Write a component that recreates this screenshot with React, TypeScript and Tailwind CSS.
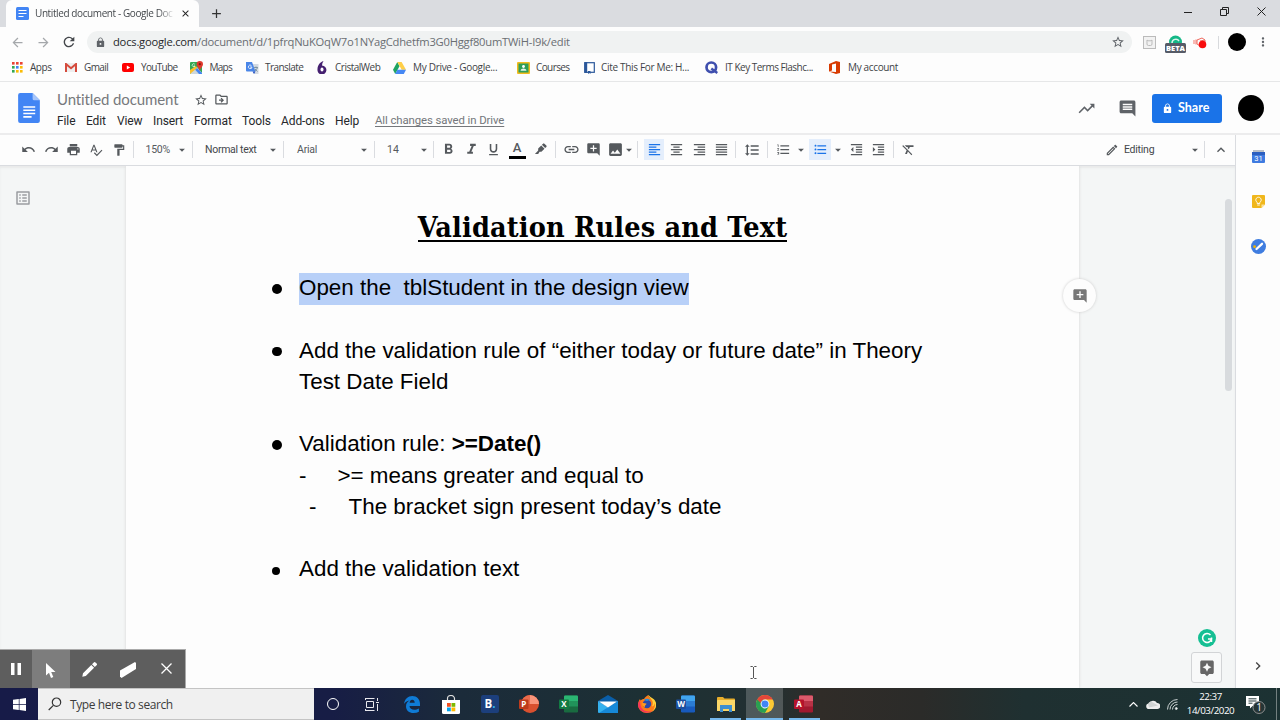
import React from "react";
import {
  MdUndo, MdRedo, MdPrint, MdSpellcheck, MdFormatPaint, MdFormatBold, MdFormatItalic, MdFormatUnderlined,
  MdLink, MdAddComment, MdImage, MdFormatAlignLeft, MdFormatAlignCenter, MdFormatAlignRight,
  MdFormatAlignJustify, MdFormatLineSpacing, MdFormatListNumbered, MdFormatListBulleted, MdFormatIndentDecrease,
  MdFormatIndentIncrease, MdFormatClear, MdOutlineEdit, MdKeyboardArrowUp, MdKeyboardArrowRight, MdStarBorder,
  MdInsertComment, MdLock, MdRefresh, MdArrowBack, MdArrowForward, MdMoreVert, MdTrendingUp, MdAssistant,
  MdAdd, MdClose, MdOutlineDriveFileMove, MdOutlineListAlt, MdArrowDropDown,
} from "react-icons/md";

type Kids = { className?: string; children?: React.ReactNode };

const Cell = ({ className = "", children }: Kids) => (
  <div className={`flex shrink-0 items-center justify-center ${className}`}>{children}</div>
);
const Sep = ({ className = "" }: Kids) => (
  <Cell className={className}><div className="h-[17px] w-px bg-[#dadce0]" /></Cell>
);
const Caret = ({ className = "" }: Kids) => (
  <Cell className={className}><MdArrowDropDown className="size-[14px] shrink-0" /></Cell>
);

function DocGlyph({ className = "" }: Kids) {
  return (
    <svg viewBox="0 0 21 29" className={className}>
      <path d="M2 0h12l7 7v20a2 2 0 0 1-2 2H2a2 2 0 0 1-2-2V2a2 2 0 0 1 2-2z" fill="#4285f4" />
      <path d="M14 0l7 7h-5.5A1.5 1.5 0 0 1 14 5.500z" fill="#a6c5fa" />
      <path d="M5 13.500h11.500M5 16.700h11.500M5 19.900h11.500M5 23.100h8" stroke="#fff" strokeWidth="1.5" />
    </svg>
  );
}

function TabStrip() {
  return (
    <div className="flex h-[27px] items-stretch bg-[#dadce0] pl-[6px]">
      <div className="flex w-[193px] items-center rounded-t-[6px] bg-[#fdfdfd] pl-[10px]">
        <svg viewBox="0 0 13 13" className="size-[13px]">
          <rect width="13" height="13" rx="1.5" fill="#4285f4" />
          <path d="M2.500 3.500h8M2.500 6.500h8M2.500 9.500h5" stroke="#fff" strokeWidth="1.2" />
        </svg>
        <div className="ml-[6px] w-[140px] whitespace-nowrap text-[10px] tracking-[-0.4px] text-[#45494d] [mask-image:linear-gradient(90deg,#000_88%,transparent)]">
          Untitled document - Google Doc
        </div>
        <MdClose className="ml-[5px] size-[11px] text-[#222]" />
      </div>
      <Cell className="w-[34px]"><MdAdd className="size-[15px] text-[#333]" /></Cell>
      <div className="flex-1" />
      <Cell className="w-[37px] pb-[3px]">
        <svg viewBox="0 0 8 8" className="size-[8px]"><path d="M0 4.500h8" stroke="#222" /></svg>
      </Cell>
      <Cell className="w-[37px] pb-[4px]">
        <svg viewBox="0 0 9 9" className="size-[9px]" fill="none" stroke="#222"><path d="M.5 2.500h6v6h-6zM2.500 2.500v-2h6v6h-2" /></svg>
      </Cell>
      <Cell className="w-[37px] pb-[4px]">
        <svg viewBox="0 0 9 9" className="size-[9px]"><path d="M.5.5l8 8M8.500.5l-8 8" stroke="#222" /></svg>
      </Cell>
    </div>
  );
}

function AddressRow() {
  return (
    <div className="flex h-[30px] items-center pl-[5px] text-[#5f6368]">
      <Cell className="w-[25px] text-[#a5a8ab]"><MdArrowBack className="size-[15px]" /></Cell>
      <Cell className="w-[26px] text-[#a5a8ab]"><MdArrowForward className="size-[15px]" /></Cell>
      <Cell className="w-[25px]"><MdRefresh className="size-[16px] text-[#44474b]" /></Cell>
      <div className="ml-[6px] flex h-[22px] w-[1045px] items-center rounded-full bg-[#f0f2f2] pl-[8px] pr-[7.500px]">
        <MdLock className="size-[11px]" />
        <span className="ml-[7px] flex-1 whitespace-nowrap text-[11.2px] tracking-[-0.22px] text-[#6a6e73]">
          <span className="text-[#26282b]">docs.google.com</span>/document/d/1pfrqNuKOqW7o1NYagCdhetfm3G0Hggf80umTWiH-I9k/edit
        </span>
        <MdStarBorder className="size-[14px]" />
      </div>
      <Cell className="w-[34px]">
        <svg viewBox="0 0 13 13" className="size-[13px]" fill="none" stroke="#bbb"><rect x=".5" y=".5" width="12" height="12" fill="#f2f2f2" /><path d="M4 4l1 .8h3L9 4v4a1.500 1.500 0 0 1-1.500 1.500h-2A1.500 1.500 0 0 1 4 8z" /></svg>
      </Cell>
      <Cell className="w-[18px]">
        <svg viewBox="0 0 21 18" className="mt-[3px] h-[18px] w-[21px] shrink-0">
          <circle cx="10.500" cy="7" r="6.500" fill="#15b887" />
          <path d="M7 8a3.800 3.800 0 0 1 7-2" fill="none" stroke="#d9f5ec" strokeWidth="1.5" />
          <rect y="8" width="21" height="10" rx="1.5" fill="#565b67" />
          <text x="10.500" y="15.900" textAnchor="middle" fontSize="7.500" fontWeight="800" fill="#fff" fontFamily="Open Sans">BETA</text>
        </svg>
      </Cell>
      <Cell className="w-[32px]">
        <svg viewBox="0 0 14 13" className="h-[13px] w-[14px]"><path d="M1 4v4M3 3.500v5" stroke="#f58c84" strokeWidth="1.2" /><path d="M4 4l5-2 3 2v4l-5 2-3-2zM7 5l5-1" fill="none" stroke="#ef6a60" /><circle cx="9.500" cy="8.500" r="3.800" fill="#f80d0d" /></svg>
      </Cell>
      <div className="ml-[2px] h-[13px] w-px bg-[#d8dadd]" />
      <div className="ml-[9px] size-[18px] rounded-full bg-black" />
      <Cell className="ml-[9px] w-[16px]"><MdMoreVert className="size-[14px]" /></Cell>
    </div>
  );
}

function Bookmarks() {
  const items: { w: string; i: string; t: string; label: string; icon: React.ReactNode }[] = [
    {
      w: "w-[53px]", i: "w-[18px]", t: "tracking-[-0.45px]", label: "Apps",
      icon: (
        <svg viewBox="0 0 11 11" className="size-[11px]">
          {["#ea4335", "#ea4335", "#ea4335", "#34a853", "#4285f4", "#fbbc05", "#34a853", "#fbbc05", "#fbbc05"].map((c, k) => (
            <rect key={k} x={(k % 3) * 4} y={Math.floor(k / 3) * 4} width="2.6" height="2.6" fill={c} />
          ))}
        </svg>
      ),
    },
    {
      w: "w-[57px]", i: "w-[19px]", t: "tracking-[-0.6px]", label: "Gmail",
      icon: (
        <svg viewBox="0 0 12 9" className="h-[9px] w-[12px]"><rect width="12" height="9" rx=".8" fill="#eee" /><path d="M1 9V1l5 4.200L11 1v8" fill="none" stroke="#d54b3d" strokeWidth="2" /></svg>
      ),
    },
    {
      w: "w-[68px]", i: "w-[19px]", t: "tracking-[-0.68px]", label: "YouTube",
      icon: <svg viewBox="0 0 12 9" className="h-[9px] w-[12px]"><rect width="12" height="9" rx="2" fill="#f00" /><path d="M4.800 2.500v4L8.200 4.500z" fill="#fff" /></svg>,
    },
    {
      w: "w-[56px]", i: "w-[19.500px]", t: "tracking-[-0.75px]", label: "Maps",
      icon: (
        <svg viewBox="0 0 13 13" className="size-[13px]"><rect y="1" width="12" height="12" rx="1" fill="#34a853" /><path d="M0 12L7 6l5 6-1 1H1z" fill="#cfd8dc" /><path d="M5 8.500L7 7l5 5v1H9z" fill="#4285f4" /><path d="M0 9l6-4 1 2-7 6z" fill="#fbc02d" /><path d="M9.800 0a3.200 3.200 0 0 1 3.200 3.200C13 5.500 10.500 6.500 9.800 10 9 6.500 6.600 5.500 6.600 3.200A3.200 3.200 0 0 1 9.800 0z" fill="#e0392c" /><circle cx="9.800" cy="3.200" r="1.100" fill="#7d1a12" /><path d="M4.800 3.200A1.500 1.500 0 1 0 5 5H3.800" fill="none" stroke="#fff" strokeWidth=".7" /></svg>
      ),
    },
    {
      w: "w-[71px]", i: "w-[19px]", t: "tracking-[-0.55px]", label: "Translate",
      icon: (
        <svg viewBox="0 0 13 13" className="size-[13px]"><path d="M5 3h7.500v10H8z" fill="#d4dae2" /><path d="M8 6.500h4M10 5.500v1M8.500 10.500L11.500 7M9 8l2.500 2.500" stroke="#607d8b" strokeWidth=".7" /><path d="M0 1h6l3.500 9.500H1a1 1 0 0 1-1-1z" fill="#4a86e8" /><path d="M5.400 4.500A1.800 1.800 0 1 0 6 6H4" fill="none" stroke="#fff" strokeWidth=".8" /><path d="M6.500 10.500h3L8 13z" fill="#2a56c6" /></svg>
      ),
    },
    {
      w: "w-[76px]", i: "w-[18px]", t: "tracking-[-0.5px]", label: "CristalWeb",
      icon: <svg viewBox="0 0 10 13" className="h-[13px] w-[10px]"><path d="M6.500 0C3 1 .5 4.500.5 8.200A4.500 4.500 0 1 0 5 4.500C5 3 5.500 1.500 6.500 0z" fill="#452070" /><ellipse cx="5" cy="8.600" rx="1.500" ry="2" fill="#fff" /></svg>,
    },
    {
      w: "w-[124px]", i: "w-[20px]", t: "tracking-[-0.3px]", label: "My Drive - Google...",
      icon: <svg viewBox="0 0 13 12" className="h-[12px] w-[13px]"><path d="M4.300 0L0 7.700 2.200 12 6.500 4.200z" fill="#1fa463" /><path d="M4.300 0h4.300L13 7.700H8.700z" fill="#ffcf48" /><path d="M2.200 12l2.200-4.300H13L10.800 12z" fill="#4688f4" /></svg>,
    },
    {
      w: "w-[67px]", i: "w-[19px]", t: "tracking-[-0.6px]", label: "Courses",
      icon: <svg viewBox="0 0 13 12" className="h-[12px] w-[13px]"><rect width="13" height="12" rx="1" fill="#f2bb1d" /><rect x="1.500" y="1.500" width="10" height="9" fill="#2f9e58" /><circle cx="6.500" cy="4.500" r="1.400" fill="#fff" /><path d="M3.500 8.700c.5-3 5.500-3 6 0z" fill="#e5f4ea" /></svg>,
    },
    {
      w: "w-[121px]", i: "w-[17px]", t: "tracking-[-0.32px]", label: "Cite This For Me: H...",
      icon: <svg viewBox="0 0 11 12" className="h-[12px] w-[11px]"><rect x=".7" y=".7" width="9.600" height="9.600" fill="#fff" stroke="#2b579a" strokeWidth="1.2" /><path d="M2 0v11" stroke="#2b579a" strokeWidth="2.400" /><path d="M4 9v3l1.300-1L6.500 12V9z" fill="#2b579a" /></svg>,
    },
    {
      w: "w-[124px]", i: "w-[20px]", t: "tracking-[-0.5px]", label: "IT Key Terms Flashc...",
      icon: <svg viewBox="0 0 13 13" className="size-[13px]"><circle cx="6.300" cy="6.300" r="4.800" fill="none" stroke="#3f4fae" strokeWidth="2.700" /><path d="M6.300 7.500l6 4.500" stroke="#3f4fae" strokeWidth="2.400" /></svg>,
    },
    {
      w: "w-[80px]", i: "w-[19px]", t: "tracking-[-0.35px]", label: "My account",
      icon: <svg viewBox="0 0 11 13" className="h-[13px] w-[11px]"><path d="M0 3L7 0l4 1v11l-4 1-7-2.500L7 11V2.500L3 3.500v6L0 10.500z" fill="#d83b01" /></svg>,
    },
  ];
  return (
    <div className="flex h-[25px] items-center border-b border-[#e6e7e8] pb-[3px] pl-[12px] text-[10px] text-[#3f4347]">
      {items.map((b) => (
        <div key={b.label} className={`flex shrink-0 items-center ${b.w}`}>
          <div className={`shrink-0 ${b.i}`}>{b.icon}</div>
          <span className={`whitespace-nowrap pb-px ${b.t}`}>{b.label}</span>
        </div>
      ))}
    </div>
  );
}

function Header() {
  const menu = [
    ["File", "w-[29px]"], ["Edit", "w-[31px]"], ["View", "w-[36px]"], ["Insert", "w-[41px]"],
    ["Format", "w-[48px]"], ["Tools", "w-[39px]"], ["Add-ons", "w-[54px]"], ["Help", "w-[40px]"],
  ];
  return (
    <div className="flex h-[53px] shrink-0 items-start border-b-2 border-[#ececed] pl-[18px]">
      <DocGlyph className="mt-[11px] h-[30px] w-[22px]" />
      <div className="ml-[17px] flex-1 font-[Roboto]">
        <div className="mt-[7px] flex h-[21px] items-center text-[#55595d]">
          <span className="w-[136.500px] whitespace-nowrap pb-px font-[Lato] text-[15px] tracking-[-0.12px] text-[#77797c]">Untitled document</span>
          <MdStarBorder className="size-[14px]" />
          <MdOutlineDriveFileMove className="ml-[6px] size-[15px]" />
        </div>
        <div className="flex h-[21px] items-center whitespace-nowrap text-[12px] tracking-[-0.1px] text-[#26282b]">
          {menu.map(([m, w]) => <span key={m} className={w}>{m}</span>)}
          <span className="text-[11.4px] text-[#74777b] underline underline-offset-2">All changes saved in Drive</span>
        </div>
      </div>
      <div className="mt-[11px] flex h-[30px] items-center text-[#5f6368]">
        <Cell className="w-[41px]"><MdTrendingUp className="size-[19px]" /></Cell>
        <Cell className="w-[41px]"><MdInsertComment className="size-[19px]" /></Cell>
        <div className="ml-[4px] flex h-[29px] w-[70px] items-center rounded-[3px] bg-[#1a73e8] pl-[10px] text-white">
          <MdLock className="size-[11px]" />
          <span className="ml-[5px] font-[Lato] text-[12.5px] font-bold">Share</span>
        </div>
        <div className="ml-[16px] mr-[16px] size-[26px] rounded-full bg-black" />
      </div>
    </div>
  );
}

function Toolbar() {
  const s = "size-[15px]";
  return (
    <div className="flex h-[31px] shrink-0 items-center border-b border-[#dadce0] pb-px pl-[17px] font-[Roboto] text-[10.500px] text-[#55595d]">
      <Cell className="w-[23px]"><MdUndo className={s} /></Cell>
      <Cell className="w-[22px]"><MdRedo className={s} /></Cell>
      <Cell className="w-[23px]"><MdPrint className={s} /></Cell>
      <Cell className="w-[22px]"><MdSpellcheck className="size-[14px]" /></Cell>
      <Cell className="w-[23px]"><MdFormatPaint className="size-[14px]" /></Cell>
      <Sep className="w-[7px]" />
      <span className="w-[38px] pl-[8.500px] tracking-[-0.25px]">150%</span>
      <Caret className="w-[14px]" />
      <Sep className="w-[6px]" />
      <span className="w-[71px] whitespace-nowrap pl-[10px] tracking-[-0.3px] text-[#44474b]">Normal text</span>
      <Caret className="w-[14px]" />
      <Sep className="w-[6px]" />
      <span className="w-[70px] pl-[11px] tracking-[-0.2px]">Arial</span>
      <Caret className="w-[16px]" />
      <Sep className="w-[4px]" />
      <span className="w-[41px] pl-[11px]">14</span>
      <Caret className="w-[14px]" />
      <Sep className="w-[5px]" />
      <Cell className="w-[24px]"><MdFormatBold className="size-[17px]" /></Cell>
      <Cell className="w-[22px]"><MdFormatItalic className="size-[17px]" /></Cell>
      <Cell className="w-[23px]"><MdFormatUnderlined className="size-[15px]" /></Cell>
      <Cell className="w-[24px]">
        <div className="flex h-[18px] w-[17px] flex-col items-center border-b-[3px] border-black text-[13px] font-medium leading-[14px]">A</div>
      </Cell>
      <Cell className="w-[23px]">
        <svg viewBox="0 0 14 14" className="size-[13px]" fill="currentColor"><path d="M13.300 2.800L11.200.7a1 1 0 0 0-1.400 0L8.500 2l3.500 3.500 1.300-1.300a1 1 0 0 0 0-1.400zM7.800 2.700L4.500 6v2L1 11.800h3.500L6 9.500h2l3.300-3.300z" /></svg>
      </Cell>
      <Sep className="w-[7px]" />
      <Cell className="w-[24px]"><MdLink className="size-[17px]" /></Cell>
      <Cell className="w-[21px]"><MdAddComment className="size-[15px]" /></Cell>
      <Cell className="w-[23px]"><MdImage className="size-[17px]" /></Cell>
      <Caret className="w-[3px]" />
      <Sep className="w-[14px]" />
      <Cell className="h-[21px] w-[20px] bg-[#e4eefc] text-[#1a73e8]"><MdFormatAlignLeft className={s} /></Cell>
      <Cell className="w-[25px]"><MdFormatAlignCenter className={s} /></Cell>
      <Cell className="w-[20px]"><MdFormatAlignRight className={s} /></Cell>
      <Cell className="w-[24px]"><MdFormatAlignJustify className={s} /></Cell>
      <Sep className="w-[5px]" />
      <Cell className="w-[27px]"><MdFormatLineSpacing className="size-[16px]" /></Cell>
      <Sep className="w-[4px]" />
      <Cell className="w-[28px]"><MdFormatListNumbered className={s} /></Cell>
      <Caret className="w-[7px]" />
      <Cell className="ml-[5px] h-[21px] w-[22px] bg-[#e4eefc] text-[#1a73e8]"><MdFormatListBulleted className={s} /></Cell>
      <Caret className="w-[13px]" />
      <Cell className="w-[24px]"><MdFormatIndentDecrease className={s} /></Cell>
      <Cell className="w-[21px]"><MdFormatIndentIncrease className={s} /></Cell>
      <Sep className="w-[8px]" />
      <Cell className="w-[23px]"><MdFormatClear className="size-[15px]" /></Cell>
      <div className="flex-1" />
      <MdOutlineEdit className="size-[14px]" />
      <span className="ml-[5px] w-[64px] tracking-[-0.25px] text-[#44474b]">Editing</span>
      <Caret className="w-[14px]" />
      <Sep className="w-[5px]" />
      <Cell className="w-[28px]"><MdKeyboardArrowUp className="size-[16px]" /></Cell>
    </div>
  );
}

function Row({ children, bullet = "", className = "" }: Kids & { bullet?: string }) {
  return (
    <div className={`flex ${className}`}>
      <div className="flex h-[31.200px] w-[29px] items-center pl-[2px] pt-[2px]">
        {bullet && <div className={`rounded-full bg-black ${bullet}`} />}
      </div>
      <div className="whitespace-nowrap">{children}</div>
    </div>
  );
}

function DocumentArea() {
  return (
    <div className="relative flex flex-1 overflow-hidden bg-[#f4f6f6] shadow-[inset_0_2px_2px_#e9eaea]">
      <div className="w-[126px] pl-[14px] pt-[23px] text-[#9a9da1]"><MdOutlineListAlt className="size-[18px]" /></div>
      <div className="w-[953px] bg-[#fdfdfd] font-['Liberation_Sans'] text-[22.4px] leading-[31.200px] text-black shadow-[0_0_3px_#d4d6d6]">
        <h1 className="flex h-[106.400px] justify-center pt-[39px] font-['DejaVu_Serif'] text-[28.500px] font-bold leading-[44px] [font-stretch:condensed]">
          <span className="h-[37px] whitespace-nowrap border-b-2 border-black leading-[44px] tracking-[0.180px]">Validation Rules and Text</span>
        </h1>
        <div className="pl-[144px]">
          <Row bullet="size-[9.500px]"><span className="-mb-px block bg-[linear-gradient(#b8d0f8,#b8d0f8)] bg-[position:0_1px] bg-no-repeat pb-px">Open the&nbsp; tblStudent in the design view</span></Row>
          <Row bullet="size-[9.500px]" className="mt-[31.200px]">Add the validation rule of “either today or future date” in Theory<br />Test Date Field</Row>
          <Row bullet="size-[9.500px]" className="mt-[31.200px]">Validation rule: <b>&gt;=Date()</b></Row>
          <div className="flex pl-[29px]"><span className="w-[38.500px]">-</span>&gt;= means greater and equal to</div>
          <div className="flex pl-[39px]"><span className="w-[39.500px]">-</span>The bracket sign present today’s date</div>
          <Row bullet="size-[8px] mt-[3px]" className="mt-[31.200px]">Add the validation text</Row>
        </div>
      </div>
      <div className="flex flex-1 flex-col items-end">
        <div className="mr-[3px] mt-[33px] h-[192px] w-[7px] rounded-full bg-[#d8dbde]" />
        <div className="flex-1" />
        <div className="mb-[5px] mr-[19px] flex size-[18px] items-center justify-center rounded-full bg-[#15bf93]">
          <svg viewBox="0 0 12 12" className="size-[12px]" fill="none" stroke="#fff" strokeWidth="1.5"><path d="M9.500 3A4.500 4.500 0 1 0 10.500 7H7M10.500 5.500V10" /></svg>
        </div>
        <div className="mb-[5px] mr-[13px] flex size-[31px] items-center justify-center rounded-[3px] border border-[#d2d4d6] bg-[#f8f9f9] text-[#666]"><MdAssistant className="size-[18px]" /></div>
      </div>
      <div className="absolute left-[1063px] top-[113px] flex size-[33px] items-center justify-center rounded-full bg-[#fdfdfd] text-[#777] shadow-[0_0_3px_#ccc]"><MdAddComment className="size-[16px]" /></div>
      <svg viewBox="0 0 7 13" className="absolute left-[750px] top-[500px] h-[13px] w-[7px]" fill="none" stroke="#555"><path d="M.5.5h2l1 1 1-1h2M3.500 1v11M.5 12.500h2l1-1 1 1h2" /></svg>
    </div>
  );
}

function SidePanel() {
  return (
    <div className="flex w-[45px] flex-col items-center border-l border-[#dadce0] pt-[14px]">
      <svg viewBox="0 0 13 14" className="h-[14px] w-[13px]"><path d="M1 1h11v3H1z" fill="#b9bfc8" /><path d="M0 3h13v10a1 1 0 0 1-1 1H1a1 1 0 0 1-1-1z" fill="#3f7be0" /><path d="M0 3h13v3H0z" fill="#2c5fc0" /><text x="6.500" y="11.500" fontSize="7.500" textAnchor="middle" fill="#fff" fontFamily="Roboto">31</text></svg>
      <svg viewBox="0 0 13 13" className="mt-[32px] size-[13px]"><path d="M1 0h11a1 1 0 0 1 1 1v8.500L9.500 13H1a1 1 0 0 1-1-1V1a1 1 0 0 1 1-1z" fill="#f0b71c" /><path d="M13 9.500L9.500 13V9.500z" fill="#fbe3a0" /><path d="M5.200 8.500V7.300a2.700 2.700 0 1 1 2.600 0v1.200zM5.200 10h2.600" fill="none" stroke="#fff" strokeWidth=".9" /></svg>
      <svg viewBox="0 0 15 15" className="mt-[31px] size-[15px]"><circle cx="7.500" cy="7.500" r="7.500" fill="#3f7de0" /><path d="M5.500 10L11 4.800" stroke="#fff" strokeWidth="2.300" strokeLinecap="round" /><circle cx="3.600" cy="7.700" r="1.400" fill="#f4b400" /></svg>
      <div className="flex-1" />
      <MdKeyboardArrowRight className="mb-[14px] size-[16px] text-[#444]" />
    </div>
  );
}

const OfficeIcon = ({ letter, top, mid, low, tile }: { letter: string; top: string; mid: string; low: string; tile: string }) => (
  <svg viewBox="0 0 20 18" className="h-[18px] w-[20px]">
    <rect x="5" y=".5" width="14" height="17" rx="1.200" fill={low} />
    <path d="M5 1.700A1.200 1.200 0 0 1 6.200.5h11.600A1.200 1.200 0 0 1 19 1.700V6H5z" fill={top} />
    <path d="M5 6h14v5.500H5z" fill={mid} />
    <rect y="4.500" width="10" height="9.500" rx="1" fill={tile} />
    <text x="5" y="12" fontSize="8" fontWeight="700" textAnchor="middle" fill="#fff" fontFamily="Open Sans">{letter}</text>
  </svg>
);

function Taskbar() {
  const c = "w-[39.250px] h-full";
  return (
    <div className="flex h-[32px] shrink-0 items-center bg-[linear-gradient(90deg,#171b48_0%,#171d45_26%,#1b2b3a_36%,#1d3034_50%,#223032_60%,#302c28_64%,#2b2b29_72%,#1f3031_80%,#1c3233_100%)]">
      <Cell className="w-[38px]">
        <svg viewBox="0 0 13 13" className="size-[13px]" fill="#fff"><path d="M0 1.800L5.800 1v5.100H0zM6.500.9L13 0v6.100H6.500zM0 6.800h5.800v5.100L0 11.200zM6.500 6.800H13V13l-6.500-.9z" /></svg>
      </Cell>
      <div className="flex h-full w-[276px] items-center border-y border-[#c4c4c4] bg-[#f0f0f0] pl-[10px] text-[#3c3c3c]">
        <svg viewBox="0 0 14 14" className="size-[14px]" fill="none" stroke="#333" strokeWidth="1.200"><circle cx="8.500" cy="5.200" r="4.200" /><path d="M5.400 8.300L.7 13" /></svg>
        <span className="ml-[8px] whitespace-nowrap pt-px text-[12px] tracking-[-0.4px]">Type here to search</span>
      </div>
      <Cell className={`${c} -ml-[0.600px]`}><div className="size-[12px] rounded-full border-[1.900px] border-white" /></Cell>
      <Cell className={c}>
        <svg viewBox="0 0 14 13" className="h-[13px] w-[14px]" fill="none" stroke="#e8e8ee"><path d="M1.500 3.500h7v6h-7zM.5 0v2M.5.500h9M.5 12.500h9M.5 11v2M12.500 0v3M12.500 6v7M11 4.500h3" /></svg>
      </Cell>
      <Cell className={c}>
        <svg viewBox="0 0 16 17" className="h-[17px] w-[16px]"><path d="M0 8C.6 3 4 0 8.300 0 13 0 16 3.500 16 8v2H5.500c.2 2.500 2.300 3.700 4.700 3.700 1.700 0 3.300-.5 4.700-1.300v3.400C13.400 16.600 11.600 17 9.600 17 5 17 2 14.300 2 10.200 2 7.500 3.500 5.500 5.500 4.500 3 4.800 1 6.300 0 8zm5.600-1.200h5.100c0-2-1-3-2.500-3S5.900 5 5.600 6.800z" fill="#0f7bd6" /></svg>
      </Cell>
      <Cell className={c}>
        <svg viewBox="0 0 18 19" className="h-[19px] w-[18px]"><path d="M5.500 6V3.500a3.500 3 0 0 1 7 0V6" fill="none" stroke="#ddd" strokeWidth="1.200" /><path d="M0 5h18v12.500a1.500 1.500 0 0 1-1.500 1.500h-15A1.500 1.500 0 0 1 0 17.500z" fill="#fff" /><path d="M5 8h3.800v3.800H5z" fill="#f25022" /><path d="M9.500 8h3.800v3.800H9.500z" fill="#7fba00" /><path d="M5 12.500h3.800v3.800H5z" fill="#00a4ef" /><path d="M9.500 12.500h3.800v3.800H9.500z" fill="#ffb900" /></svg>
      </Cell>
      <Cell className={c}><div className="flex size-[18px] items-center justify-center rounded-[2px] bg-[#1c3f7c] text-[11.500px] font-bold text-white">B<span className="text-[#31b5f0]">.</span></div></Cell>
      <Cell className={c}>
        <svg viewBox="0 0 20 18" className="h-[18px] w-[20px]"><circle cx="11" cy="9" r="9" fill="#d9502f" /><path d="M11 0a9 9 0 0 1 9 9h-9z" fill="#f9957b" /><path d="M11 0v9H2a9 9 0 0 1 9-9z" fill="#ea6b4c" /><rect y="4.500" width="9.500" height="9.500" rx="1" fill="#bd3b1c" /><text x="4.800" y="12" fontSize="8" fontWeight="700" textAnchor="middle" fill="#fff" fontFamily="Open Sans">P</text></svg>
      </Cell>
      <Cell className={c}><OfficeIcon letter="X" top="#2bb673" mid="#21935a" low="#196b40" tile="#127a43" /></Cell>
      <Cell className={c}>
        <svg viewBox="0 0 20 18" className="h-[18px] w-[20px]"><path d="M0 6l10-6 10 6v2H0z" fill="#0a5ea8" /><path d="M2 5h16v8H2z" fill="#fff" /><path d="M0 6l10 6.500L20 6v11a1 1 0 0 1-1 1H1a1 1 0 0 1-1-1z" fill="#35b1ee" /><path d="M20 6v12H1z" fill="#1689d8" /><path d="M2 5h16l1 1.700-9 5.800L1 6.700z" fill="#0a5ea8" /><path d="M1 6.500h18L10 12.500z" fill="#fff" /></svg>
      </Cell>
      <Cell className={c}>
        <svg viewBox="0 0 18 18" className="size-[18px]"><path d="M2 4l.5 1.500C4 4 5 4 6 4c1-2 2.500-3 4.500-4-.3 1.500.5 2 1.500 3C15 4 18 6 18 10a9 8 0 0 1-18 0c0-2.500.8-4.500 2-6z" fill="#ff7a18" /><path d="M10.500 0c-.3 1.500.5 2 1.500 3 3 2.500 3.500 5 2 8.500 2-.5 2.500-2 2.700-3.500 1 4-1.200 8-4.200 9.200C20 15 19 6.500 15.500 4 13.500 2.500 12 2 10.500 0z" fill="#ffd23c" /><path d="M0 10a9 8 0 0 0 15 5.500C9 18 3.500 15.500 2.500 10L2 5.500C.5 7 0 8.500 0 10z" fill="#f6365a" /><circle cx="9" cy="9" r="4.200" fill="#2b49a8" /><path d="M4 8.500c1.500-1 3 .3 4.500 0C8.500 10 6.500 10 7 12c-2-.5-3-2-3-3.500z" fill="#ff9b1f" /><path d="M6 5c2-2 5-1.500 6.500.5C11 5 10 5.500 9 6z" fill="#1f8fe0" /></svg>
      </Cell>
      <Cell className={c}><OfficeIcon letter="W" top="#41a5ee" mid="#2b7cd3" low="#185abd" tile="#1c4f9f" /></Cell>
      <Cell className={c}>
        <div className="flex h-full w-[31px] flex-col items-center justify-end border-b-2 border-[#76b9ed] pb-[6px]">
          <svg viewBox="0 0 18 15" className="h-[15px] w-[18px]"><path d="M0 1a1 1 0 0 1 1-1h5l1.500 1.500H17a1 1 0 0 1 1 1V14H0z" fill="#e8ae2c" /><path d="M1 3h17v11H0V4a1 1 0 0 1 1-1z" fill="#fbd768" /><path d="M3 8h12v7h-3v-3H6v3H3z" fill="#3e8fd0" /></svg>
        </div>
      </Cell>
      <Cell className={c}>
        <div className="flex h-full w-[37px] flex-col items-center justify-end border-b-2 border-[#76b9ed] bg-white/20 pb-[5px]">
          <svg viewBox="0 0 18 18" className="size-[18px]"><circle cx="9" cy="9" r="9" fill="#fcc934" /><path d="M1.200 4.500a9 9 0 0 0 7.800 13.500l4-7-4-2z" fill="#2aa052" /><path d="M1.200 4.500L5 11l4-6.500z" fill="#2aa052" /><path d="M1.200 4.500A9 9 0 0 1 16.800 4.500H9A4.500 4.500 0 0 0 4.800 8z" fill="#e5463a" /><circle cx="9" cy="9" r="4.400" fill="#fff" /><circle cx="9" cy="9" r="3.500" fill="#4285f4" /></svg>
        </div>
      </Cell>
      <Cell className={c}>
        <div className="flex h-full w-[31px] flex-col items-center justify-end border-b-2 border-[#76b9ed] pb-[5px]"><OfficeIcon letter="A" top="#dc5a6c" mid="#b83246" low="#a0192f" tile="#b5122b" /></div>
      </Cell>
      <div className="flex-1" />
      <Cell className="w-[20px]"><svg viewBox="0 0 9 5" className="h-[5px] w-[9px]" fill="none" stroke="#fff" strokeWidth="1.100"><path d="M.5 4.500l4-4 4 4" /></svg></Cell>
      <Cell className="w-[19px]"><svg viewBox="0 0 14 9" className="h-[9px] w-[14px]"><path d="M3 9a2.800 2.800 0 0 1 0-5.600A4.500 4.500 0 0 1 11 3a3 3 0 0 1 .5 6z" fill="#eee" /><path d="M2 4a4 4 0 0 1 3-2.500l7 4-9 2z" fill="#d0d3d3" /></svg></Cell>
      <Cell className="w-[21px]"><svg viewBox="0 0 11 11" className="size-[11px]" fill="none" stroke="#ccd3d3"><path d="M.5 10.500a10 10 0 0 1 10-10M3 10.500A7.500 7.500 0 0 1 10.500 3M5.500 10.500a5 5 0 0 1 5-5" /><circle cx="9.300" cy="9.500" r="1" fill="#fff" /></svg></Cell>
      <div className="w-[55px] whitespace-nowrap pb-px text-center text-[9.800px] leading-[14px] tracking-[-0.45px] text-white">22:37<br />14/03/2020</div>
      <Cell className="ml-[8px] w-[20px]">
        <svg viewBox="0 0 20 20" className="size-[20px] shrink-0"><path d="M0 2h13v10H6.500L4 14.500V12H0z" fill="#fff" /><path d="M2.500 4.800h8M2.500 7h8M2.500 9.200h4" stroke="#263b3c" /><circle cx="13" cy="13.500" r="6" fill="#263536" stroke="#999" strokeWidth=".9" /><text x="13" y="17" fontSize="10" textAnchor="middle" fill="#fff" fontFamily="Open Sans">1</text></svg>
      </Cell>
      <div className="ml-[10px] mr-[3px] h-full w-px bg-[#738080]" />
    </div>
  );
}

function RecorderBar() {
  return (
    <div className="absolute bottom-[32px] left-0 flex h-[39px] w-[186px] items-stretch border-r border-t border-[#aaa] bg-[#5e5e5e] text-white">
      <Cell className="w-[32px] pb-px"><svg viewBox="0 0 10 12" className="h-[12px] w-[10px]" fill="#fff"><path d="M0 0h3.500v12H0zM6.500 0H10v12H6.500z" /></svg></Cell>
      <Cell className="w-[38px] bg-[#7d7d7d]"><svg viewBox="0 0 10 15" className="mt-[2px] h-[15px] w-[10px]" fill="#fff"><path d="M0 0v12.500l3-2.700L5 15l2.300-1L5.200 9H9.500z" /></svg></Cell>
      <Cell className="w-[39px]"><svg viewBox="0 0 15 15" className="mt-[1px] size-[15px]" fill="#fff"><path d="M1 11.200L9.300 3l2.800 2.800L3.800 14 .3 14.800zM10 2.300L11.800.5a1.200 1.200 0 0 1 1.700 0l1.100 1.100a1.200 1.200 0 0 1 0 1.700l-1.800 1.800z" /></svg></Cell>
      <Cell className="w-[38px]"><svg viewBox="0 0 16 16" className="mt-[1px] size-[16px]" fill="#fff"><path d="M0 8.500L15 0l1 1v6L1.500 16 0 14.500z" /></svg></Cell>
      <Cell className="w-[38px] pb-px"><svg viewBox="0 0 11 11" className="size-[11px]" fill="none" stroke="#fff" strokeWidth="1.300"><path d="M.5.5l10 10M10.500.5l-10 10" /></svg></Cell>
    </div>
  );
}

export default function App() {
  return (
    <div className="relative flex h-[720px] w-[1280px] flex-col overflow-hidden bg-[#fdfdfd] font-['Open_Sans',sans-serif]">
      <TabStrip />
      <AddressRow />
      <Bookmarks />
      <Header />
      <div className="flex min-h-0 flex-1">
        <div className="flex w-[1235px] flex-col">
          <Toolbar />
          <DocumentArea />
        </div>
        <SidePanel />
      </div>
      <Taskbar />
      <RecorderBar />
    </div>
  );
}
